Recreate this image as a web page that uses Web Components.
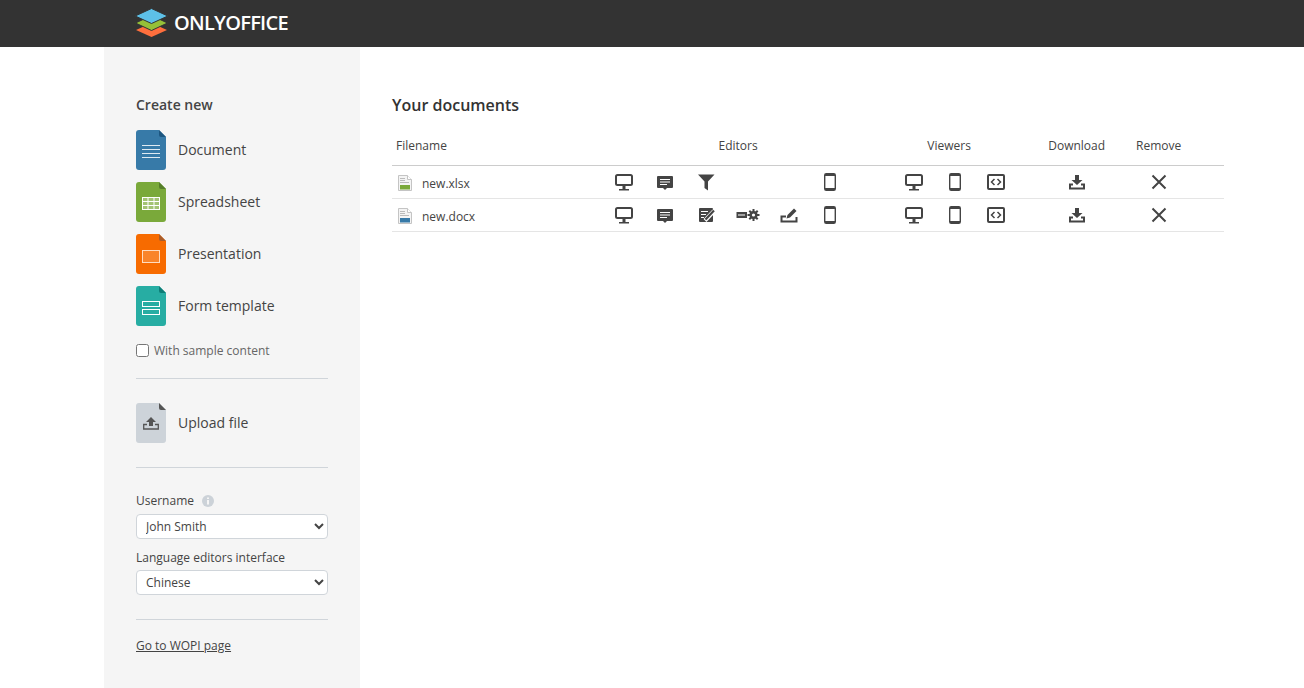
<!DOCTYPE html>
<html lang="en">
<head>
<meta charset="utf-8">
<title>ONLYOFFICE</title>
<style>
  html, body { margin: 0; height: 100%; }
  body { font-family: "Open Sans", sans-serif; color: #444; background: #fff; overflow: hidden; }
</style>
</head>
<body>
<app-shell>
  <app-header slot="header"></app-header>
  <side-bar slot="side">
    <h-title>Create new</h-title>
    <create-item kind="word">Document</create-item>
    <create-item kind="cell">Spreadsheet</create-item>
    <create-item kind="slide">Presentation</create-item>
    <create-item kind="form">Form template</create-item>
  </side-bar>
  <doc-list slot="main"></doc-list>
</app-shell>

<script>
// Inline icon set, 24x24 unless noted
const ICONS = {
  desktop: `<rect x="4" y="5" width="16" height="10" rx="1.500" fill="none" stroke="#444" stroke-width="2"/><path d="M10.500 16h3v3h-3zM7 19h10v1.500H7z" fill="#444"/>`,
  comment: `<path d="M5 6h14a1 1 0 0 1 1 1v10a1 1 0 0 1-1 1h-5l-2 2-2-2H5a1 1 0 0 1-1-1V7a1 1 0 0 1 1-1z" fill="#444"/><path d="M7 9.500h10M7 12h10M7 14.500h7" stroke="#fff" stroke-width="1"/>`,
  filter: `<path d="M4 4.500h16.500l-6.500 7v9l-3.500-2.500v-6.500z" fill="#444"/>`,
  edit: `<rect x="5" y="5" width="14" height="14" rx="1" fill="#444"/><path d="M7 8.500h7M7 11.500h5M7 14.500h3" stroke="#fff"/><path d="M11 17.500l9-9.500" stroke="#fff" stroke-width="4"/><path d="M11.500 16.500l8.500-9" stroke="#444" stroke-width="2.200"/>`,
  block: `<rect x=".5" y="9" width="10.500" height="6" fill="#444"/><rect x="2" y="11.500" width="7" height="1" fill="#fff"/><path d="M17.500 6v12M11.500 12h12M13.300 7.800l8.400 8.400M21.700 7.800l-8.400 8.400" stroke="#444" stroke-width="2"/><circle cx="17.500" cy="12" r="4" fill="#444"/><circle cx="17.500" cy="12" r="1.600" fill="#fff"/>`,
  sign: `<path d="M9 13.500H4.500v5h15V14" fill="none" stroke="#444" stroke-width="2"/><path d="M9.500 15.500l1-3.500L17 5.500 19.500 8 13 14.500z" fill="#444"/>`,
  mobile: `<rect x="6.700" y="3.700" width="10.600" height="16.600" rx="1.500" fill="none" stroke="#444" stroke-width="1.400"/><path d="M7 4h10v2H7zM7 18h10v2H7z" fill="#444"/>`,
  embed: `<rect x="4" y="5" width="16" height="14" rx="1" fill="none" stroke="#444" stroke-width="2"/><path d="M10.500 9l-3 3 3 3M13.500 9l3 3-3 3" fill="none" stroke="#444" stroke-width="1.500"/>`,
  download: `<path d="M8 14.500H5v4h14v-4h-3" fill="none" stroke="#444" stroke-width="2"/><path d="M10 5h4v5h3.500L12 15l-5.500-5H10z" fill="#444"/>`,
  remove: `<path d="M5.500 5.500l13 13M18.500 5.500l-13 13" stroke="#444" stroke-width="2"/>`
};

// Sheet colours for the create buttons: body, fold, inner glyph
const SHEETS = {
  word: ['#377aa8', '#1d5680', `<path d="M6 15.500h18M6 19.500h18M6 23.500h18M6 27.500h18" stroke="#dfeaf2" stroke-width="1"/>`],
  cell: ['#7aa93a', '#557e29', `<rect x="6" y="15" width="18" height="13" fill="#fff"/><path d="M7 16h4.500v3H7zM12.500 16h5v3h-5zM18.500 16H23v3h-4.500zM7 20h4.500v3H7zM12.500 20h5v3h-5zM18.500 20H23v3h-4.500zM7 24h4.500v3H7zM12.500 24h5v3h-5zM18.500 24H23v3h-4.500z" fill="#a3c373"/>`],
  slide: ['#f76b00', '#a85c2a', `<rect x="6.500" y="16.500" width="17" height="12" fill="#f9842a" stroke="#ffdcc0" stroke-width="1"/>`],
  form: ['#27ada3', '#0d7d76', `<rect x="6.500" y="15.500" width="17" height="5" fill="none" stroke="#fff" stroke-width="1"/><rect x="6.500" y="23.500" width="17" height="5" fill="none" stroke="#fff" stroke-width="1"/>`],
  upload: ['#cdd3d9', '#555', `<path d="M15 14l5 5h-3v4h-4v-4h-3z" fill="#555"/><path d="M11 21.500H7.700v4.500h14.600v-4.500H19" fill="none" stroke="#555" stroke-width="1.300"/>`]
};

function sheetSvg(kind) {
  const [body, fold, glyph] = SHEETS[kind];
  return `<svg width="30" height="40" viewBox="0 0 30 40">
    <path d="M3 0h20l7 7v30a3 3 0 0 1-3 3H3a3 3 0 0 1-3-3V3a3 3 0 0 1 3-3z" fill="${body}"/>
    <path d="M23 0l7 7h-5a2 2 0 0 1-2-2z" fill="${fold}"/>${glyph}</svg>`;
}

class AppShell extends HTMLElement {
  constructor() {
    super();
    this.attachShadow({ mode: 'open' });
    this.shadowRoot.innerHTML = `
      <style>
        :host { display: flex; flex-direction: column; height: 688px; }
        .body { flex: 1; display: flex; padding-left: 104px; min-height: 0; }
      </style>
      <slot name="header"></slot>
      <div class="body">
        <slot name="side"></slot>
        <slot name="main"></slot>
      </div>`;
  }
}

class AppHeader extends HTMLElement {
  constructor() {
    super();
    this.attachShadow({ mode: 'open' });
    this.shadowRoot.innerHTML = `
      <style>
        :host { display: flex; align-items: center; height: 47px; background: #333; padding-left: 136px; flex: none; }
        svg { display: block; margin-top: -1px; overflow: visible; }
        span { margin: -2px 0 0 6px; color: #fff; font: 600 20px/47px "Open Sans", sans-serif; letter-spacing: -0.72px; }
      </style>
      <svg width="32" height="30" viewBox="0 0 32 30">
        <path d="M15.500 15L31 22l-15.500 7L0 22z" fill="#ff6f3d"/>
        <path d="M15.500 7.500L31.500 15l-16 7.500L-.5 15z" fill="#95c038" stroke="#333" stroke-width="1"/>
        <path d="M15.500 .5L31.800 8l-16.300 7.500L-.8 8z" fill="#5dc0e8" stroke="#333" stroke-width="1"/>
      </svg>
      <span>ONLYOFFICE</span>`;
  }
}

class HTitle extends HTMLElement {
  constructor() {
    super();
    this.attachShadow({ mode: 'open' });
    this.shadowRoot.innerHTML = `
      <style>
        :host { display: block; font-size: 14px; font-weight: 600; line-height: 20px; color: #444; margin-bottom: 15px; }
      </style>
      <slot></slot>`;
  }
}

class CreateItem extends HTMLElement {
  constructor() {
    super();
    this.attachShadow({ mode: 'open' });
  }

  connectedCallback() {
    this.shadowRoot.innerHTML = `
      <style>
        :host { display: flex; align-items: center; height: 40px; margin-bottom: 12px; font-size: 14px; color: #444; }
        svg { display: block; margin-right: 12px; flex: none; }
        span { margin-top: -2px; }
      </style>
      ${sheetSvg(this.getAttribute('kind'))}
      <span><slot></slot></span>`;
  }
}

class SideBar extends HTMLElement {
  constructor() {
    super();
    this.attachShadow({ mode: 'open' });
    this.shadowRoot.innerHTML = `
      <style>
        :host { display: block; box-sizing: border-box; width: 256px; flex: none; background: #f5f5f5; padding: 48px 32px 0; font-size: 12px; color: #444; }
        .sample { display: flex; align-items: center; height: 16px; margin-top: 16px; color: #666; }
        .sample input { width: 13px; height: 13px; margin: 0 5px 0 0; }
        hr { border: 0; border-top: 1px solid #d0d5da; margin: 0; }
        .sample + hr { margin-top: 20px; }
        .upload { margin: 24px 0; }
        .label { display: flex; align-items: center; line-height: 18px; }
        .label svg { margin-left: 8px; }
        .user { margin-top: 24px; }
        select { display: block; box-sizing: border-box; width: 192px; height: 25px; margin: 4px 0 10px; padding: 0 5px; background: #fff; border: 1px solid #d0d5da; border-radius: 4px; font: 12px "Open Sans", sans-serif; color: #444; }
        select.last { margin: 3px 0 24px; }
        a { display: block; margin-top: 17px; color: #444; line-height: 18px; text-decoration: underline; }
      </style>
      <slot></slot>
      <label class="sample"><input type="checkbox"><span>With sample content</span></label>
      <hr>
      <create-item class="upload" kind="upload">Upload file</create-item>
      <hr>
      <div class="user">
        <div class="label">Username
          <svg width="12" height="12" viewBox="0 0 12 12"><circle cx="6" cy="6" r="6" fill="#ccd2d8"/><path d="M5 2.500h2v1.500H5zM5 5h2v4.500H5z" fill="#f5f5f5"/></svg>
        </div>
        <select><option>John Smith</option></select>
        <div class="label">Language editors interface</div>
        <select class="last"><option>Chinese</option></select>
      </div>
      <hr>
      <a href="#">Go to WOPI page</a>`;
  }
}

class DocRow extends HTMLElement {
  constructor() {
    super();
    this.attachShadow({ mode: 'open' });
  }

  connectedCallback() {
    const color = this.getAttribute('color');
    const editors = this.getAttribute('editors').split(',');
    const cell = name => `<div class="c">${name ? `<svg width="24" height="24" viewBox="0 0 24 24">${ICONS[name]}</svg>` : ''}</div>`;
    this.shadowRoot.innerHTML = `
      <style>
        :host { display: grid; grid-template-columns: var(--doc-cols); height: 32px; border-bottom: 1px solid #e5e5e5; align-items: center; font-size: 12px; color: #444; }
        .name { display: flex; align-items: center; padding: 2px 0 0 6px; }
        .name svg { margin-right: 10px; }
        .c { display: flex; justify-content: center; }
        .c svg { display: block; }
      </style>
      <div class="name">
        <svg width="14" height="16" viewBox="0 0 14 16">
          <path d="M.5.500h9l4 4v11H.5z" fill="#f4f4f4" stroke="#c4c4c4"/>
          <path d="M9.500.500v4h4" fill="#fff" stroke="#c4c4c4"/>
          <path d="M2 3.500h5M2 5.500h5M2 7.500h9" stroke="#bbb"/>
          <rect x="2" y="10" width="10" height="4.500" fill="${color}"/>
        </svg>
        <slot></slot>
      </div>
      ${editors.map(cell).join('')}
      <div></div>
      ${['desktop', 'mobile', 'embed'].map(cell).join('')}
      <div></div>
      ${cell('download')}
      ${cell('remove')}`;
  }
}

class DocList extends HTMLElement {
  constructor() {
    super();
    this.attachShadow({ mode: 'open' });
    this.shadowRoot.innerHTML = `
      <style>
        :host { display: block; flex: 1; padding: 48px 80px 0 32px; color: #444;
          --doc-cols: 211.5px repeat(6, 41.2px) 43px repeat(3, 41px) 19px 82px 82px 1fr; }
        h2 { margin: 0 0 10px; font-size: 16px; font-weight: 600; line-height: 20px; color: #333; }
        .head { display: grid; grid-template-columns: var(--doc-cols); height: 40px; align-items: center; border-bottom: 1px solid #ccc; font-size: 12px; text-align: center; }
        .head .file { text-align: left; padding-left: 4px; }
        .head .ed { grid-column: 2 / span 6; padding-left: 22px; }
        .head .vw { grid-column: 9 / span 3; padding-right: 12px; }
        .head .dl { grid-column: 13; }
        .head .rm { grid-column: 14; }
      </style>
      <h2>Your documents</h2>
      <div class="head">
        <div class="file">Filename</div>
        <div class="ed">Editors</div>
        <div class="vw">Viewers</div>
        <div class="dl">Download</div>
        <div class="rm">Remove</div>
      </div>
      <doc-row color="#7aa93a" editors="desktop,comment,filter,,,mobile">new.xlsx</doc-row>
      <doc-row color="#377aa8" editors="desktop,comment,edit,block,sign,mobile">new.docx</doc-row>`;
  }
}

customElements.define('h-title', HTitle);
customElements.define('create-item', CreateItem);
customElements.define('doc-row', DocRow);
customElements.define('app-header', AppHeader);
customElements.define('side-bar', SideBar);
customElements.define('doc-list', DocList);
customElements.define('app-shell', AppShell);
</script>
</body>
</html>
